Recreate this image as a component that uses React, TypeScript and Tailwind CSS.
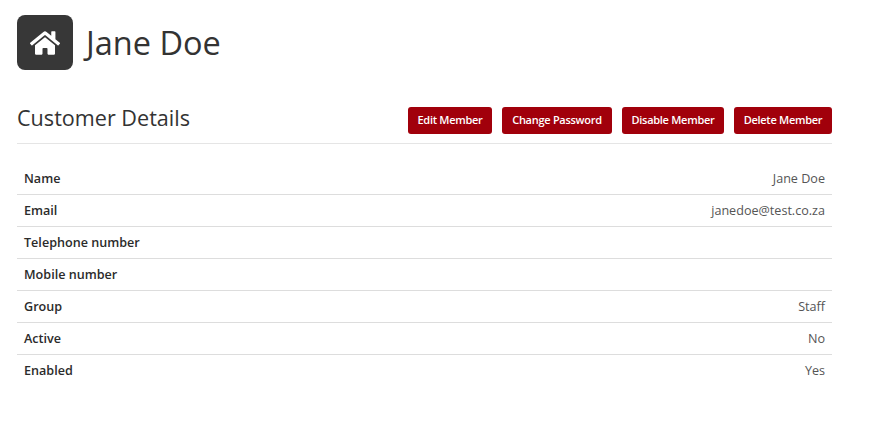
import { FaHome } from "react-icons/fa";

const rows = [
  { label: "Name", value: "Jane Doe" },
  { label: "Email", value: "janedoe@test.co.za" },
  { label: "Telephone number", value: "" },
  { label: "Mobile number", value: "" },
  { label: "Group", value: "Staff" },
  { label: "Active", value: "No" },
  { label: "Enabled", value: "Yes" },
];

const actions = [
  { label: "Edit Member", width: "w-[84px]" },
  { label: "Change Password", width: "w-[110px]" },
  { label: "Disable Member", width: "w-[102px]" },
  { label: "Delete Member", width: "w-[98px]" },
];

export default function App() {
  return (
    <div className="min-h-[422px] bg-white pl-[17px] pt-[15px] font-['Open_Sans',sans-serif] text-[#333]">
      <div className="w-[815px]">
        <div className="flex items-center gap-[13px]">
          <div className="flex h-[55px] w-[56px] items-center justify-center rounded-[8px] bg-[#373737] text-white">
            <FaHome className="h-[30px] w-[30px]" />
          </div>
          <h1 className="pt-[1px] text-[32.5px] leading-[44px] text-[#333]">Jane Doe</h1>
        </div>

        <div className="mt-[37px] flex items-start justify-between border-b border-[#e5e5e5] pb-[9px]">
          <h2 className="text-[21.6px] leading-[22px] text-[#333]">Customer Details</h2>
          <div className="flex gap-[10px]">
            {actions.map((action) => (
              <button
                key={action.label}
                className={`${action.width} h-[27px] rounded-[3px] bg-[#a1000b] text-[11px] font-semibold tracking-[-0.28px] text-white`}
              >
                {action.label}
              </button>
            ))}
          </div>
        </div>

        <div className="mt-[19px]">
          {rows.map((row, i) => (
            <div
              key={row.label}
              className={
                i === rows.length - 1
                  ? "flex h-[32px] items-center justify-between border-b border-transparent px-[7px] pt-[1px] text-[12.6px]"
                  : "flex h-[32px] items-center justify-between border-b border-[#dddddd] px-[7px] pt-[1px] text-[12.6px]"
              }
            >
              <span className="font-semibold text-[#2b2b2b]">{row.label}</span>
              <span className="text-[#555]">{row.value}</span>
            </div>
          ))}
        </div>
      </div>
    </div>
  );
}
